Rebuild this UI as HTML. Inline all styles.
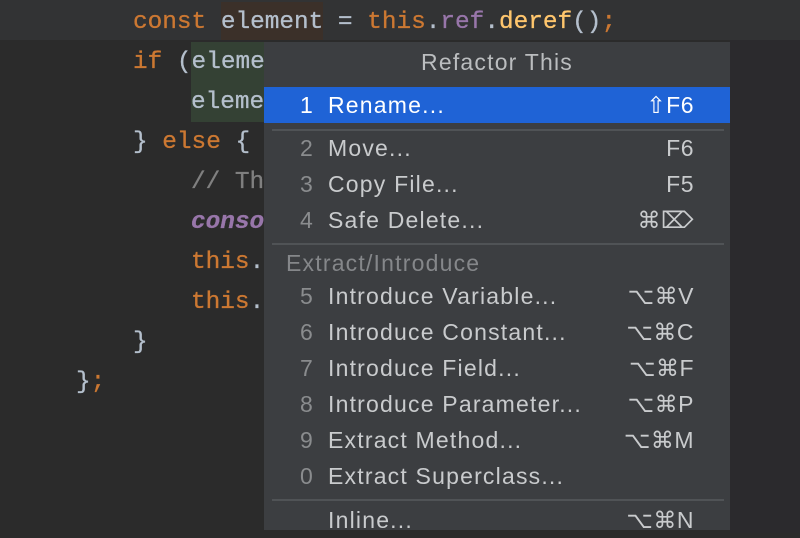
<!DOCTYPE html>
<html><head><meta charset="utf-8"><style>
*{margin:0;padding:0;box-sizing:border-box}
body{width:800px;height:533px;overflow:hidden;background:#2b2b2b;position:relative;font-family:"Liberation Mono",monospace}
.cl{position:absolute;left:0;top:0;width:800px;height:40px;background:#323334}
.ln{position:absolute;font-size:24.4px;line-height:40px;white-space:pre;color:#b4bfcc;letter-spacing:0;-webkit-text-stroke:0.3px currentColor}
.k{color:#cc7832}.p{color:#9876aa}.f{color:#ffc66d}.c{color:#808080}.i{color:#9876aa;font-style:italic;font-weight:bold}
.menu{position:absolute;left:264px;top:42px;width:466px;height:488px;background:#3c3e41;font-family:"Liberation Sans",sans-serif;color:#c9cbcd;font-size:23px;letter-spacing:1.2px}
.hd{position:absolute;left:0;top:0;width:100%;height:42px;text-align:center;line-height:40px;color:#bbbdbf;font-size:23px}
.row{position:absolute;left:0;width:100%;height:36px;line-height:36px}
.row .n{position:absolute;left:36px;color:#8a8c8e}
.row .t{position:absolute;left:64px}
.row .s{position:absolute;right:36px;letter-spacing:0.5px}
.sel{background:#1f63d6;color:#fff}
.sel .n{color:#fff}
.sep{position:absolute;left:8px;right:6px;height:2px;background:#505356}
.grp{position:absolute;left:22px;color:#85878a;line-height:36px}
</style></head><body>
<div class="cl"></div>
<div style="position:absolute;left:221px;top:2px;width:102px;height:38px;background:#3b3029"></div>
<div style="position:absolute;left:191px;top:42px;width:73px;height:80px;background:#344134"></div>
<div class="ln" style="left:133px;top:3px"><span class="k">const</span> element = <span class="k">this</span>.<span class="p">ref</span>.<span class="f">deref</span>()<span class="k">;</span></div>
<div class="ln" style="left:133px;top:43px"><span class="k">if</span> (eleme</div>
<div class="ln" style="left:191px;top:83px">eleme</div>
<div class="ln" style="left:133px;top:123px">} <span class="k">else</span> {</div>
<div class="ln" style="left:191px;top:163px"><span class="c">// Th</span></div>
<div class="ln" style="left:191px;top:203px"><span class="i">conso</span></div>
<div class="ln" style="left:191px;top:243px"><span class="k">this</span>.</div>
<div class="ln" style="left:191px;top:283px"><span class="k">this</span>.</div>
<div class="ln" style="left:133px;top:323px">}</div>
<div class="ln" style="left:76px;top:363px">}<span class="k">;</span></div>
<div style="position:absolute;left:730px;top:40px;width:70px;height:493px;background:#2b2a2d"></div>
<div class="menu">
<div class="hd">Refactor This</div>
<div class="row sel" style="top:45px"><span class="n">1</span><span class="t">Rename...</span><span class="s">⇧F6</span></div>
<div class="sep" style="top:87px"></div>
<div class="row" style="top:88px"><span class="n">2</span><span class="t">Move...</span><span class="s">F6</span></div>
<div class="row" style="top:124px"><span class="n">3</span><span class="t">Copy File...</span><span class="s">F5</span></div>
<div class="row" style="top:160px"><span class="n">4</span><span class="t">Safe Delete...</span><span class="s">⌘⌦</span></div>
<div class="sep" style="top:201px"></div>
<div class="grp" style="top:203px">Extract/Introduce</div>
<div class="row" style="top:236px"><span class="n">5</span><span class="t">Introduce Variable...</span><span class="s">⌥⌘V</span></div>
<div class="row" style="top:272px"><span class="n">6</span><span class="t">Introduce Constant...</span><span class="s">⌥⌘C</span></div>
<div class="row" style="top:308px"><span class="n">7</span><span class="t">Introduce Field...</span><span class="s">⌥⌘F</span></div>
<div class="row" style="top:344px"><span class="n">8</span><span class="t">Introduce Parameter...</span><span class="s">⌥⌘P</span></div>
<div class="row" style="top:380px"><span class="n">9</span><span class="t">Extract Method...</span><span class="s">⌥⌘M</span></div>
<div class="row" style="top:416px"><span class="n">0</span><span class="t">Extract Superclass...</span></div>
<div class="sep" style="top:457px"></div>
<div class="row" style="top:460px"><span class="t">Inline...</span><span class="s">⌥⌘N</span></div>
</div>
</body></html>
